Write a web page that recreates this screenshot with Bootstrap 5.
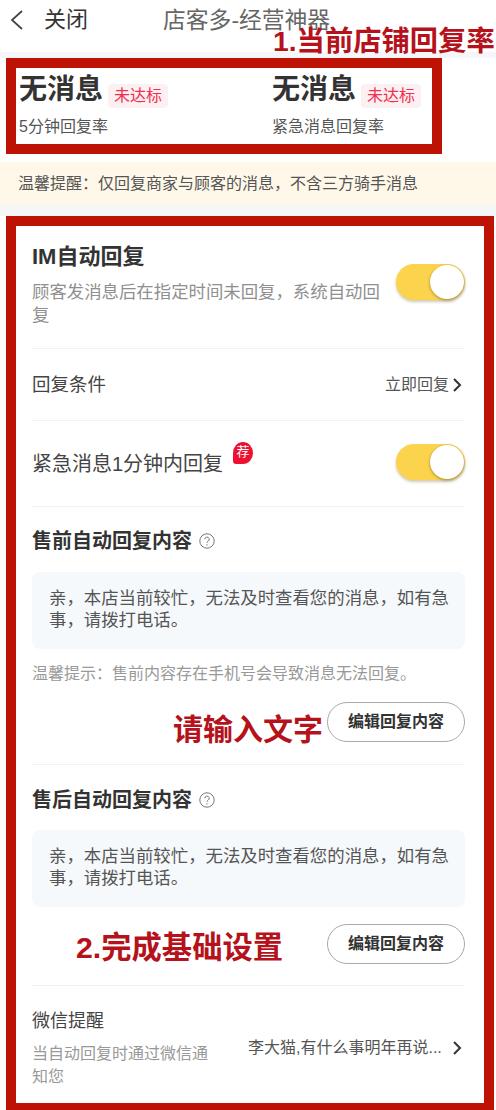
<!DOCTYPE html>
<html lang="zh-CN">
<head>
<meta charset="utf-8">
<title>店客多-经营神器</title>
<link href="https://cdn.jsdelivr.net/npm/bootstrap@5.3.0/dist/css/bootstrap.min.css" rel="stylesheet">
<style>
html,body{margin:0;background:#fff}
body{width:496px;height:1110px;overflow:hidden;position:relative;font-family:"Liberation Sans","Noto Sans CJK SC",sans-serif;color:#333}
.topbar{height:52px;padding:0 0 12px 10px}
.back-ic{width:13px;height:20px;margin-right:21px}
.close-txt{font-size:22px;line-height:1;width:44px;color:#333}
.page-title{font-size:22.8px;line-height:1;color:#666;margin-left:75px;white-space:nowrap}
.rate-zone{background:#fff;padding:6px 0 8px 6px;box-shadow:inset 0 6px 0 #f5f6f8}
.rate-box{width:436px;height:96px;border:10px solid #be1205;background:#fff;padding:2px 0 0 3px}
.rate-col{width:253px;flex:none}
.rate-col-end{flex:1 1 0;min-width:0}
.rate-val{font-size:28px;font-weight:700;line-height:40px;color:#333;white-space:nowrap}
.rate-tag{font-size:16px;line-height:24px;background:#fdf0f2;color:#f0304f;padding:0 6px;border-radius:4px;margin-left:5px;margin-top:11px}
.rate-lab{font-size:16px;line-height:22px;color:#555;margin-top:6px;white-space:nowrap}
.tip-band{height:43px;background:#fff8e8;padding-left:18px;font-size:16px;line-height:43px;color:#555}
.gap-band{height:11px;background:#f5f6f8}
.set-box{margin:0 2px 0 6px;height:894px;border:10px solid #be1205;border-bottom-width:7px;background:#fff;padding:0 19px 0 16px;position:relative}
.sect{border-bottom:1px solid #f1f2f3}
.sect-im{height:123px;padding-top:15px;position:relative}
.h-main{font-size:22px;font-weight:700;line-height:32px;color:#333}
.desc{font-size:17.4px;line-height:23px;color:#8f8f8f;width:352px;margin-top:8px}
.tgl{width:69px;height:36px;border-radius:18px;background:#fcd34d;position:relative;flex:none;box-shadow:0 2px 3px rgba(120,100,30,.35)}
.tgl-knob{position:absolute;right:1px;top:1px;width:34px;height:34px;border-radius:50%;background:#fff;box-shadow:0 1px 3px rgba(90,75,20,.55)}
.tgl-im{position:absolute;right:0;top:38px}
.tgl-up{margin-top:-4px}
.sect-cond{height:72px;font-size:18.5px;color:#444}
.side-txt{font-size:16px;color:#555;white-space:nowrap}
.chev{width:10px;height:16px;margin-left:3px;margin-right:3px}
.sect-urg{height:86px;font-size:20px;color:#444}
.hot{width:20px;height:22px;font-size:13px;line-height:20px;color:#fff;background:#ee1030;text-align:center;border-radius:50% 50% 50% 3px;position:absolute;left:217px;top:216px}
.sect-pre{height:258px;padding-top:23px}
.sect-post{height:221px;padding-top:24px}
.h-sub{font-size:20px;font-weight:700;line-height:22px;color:#333}
.q-ic{width:16px;height:16px;margin-left:7px}
.msg-box{margin-top:20px;height:77px;background:#f5f9fc;border-radius:8px;padding:15px 16px 0 17px;font-size:17.4px;line-height:22px;color:#555}
.sect-post .msg-box{margin-top:19px}
.warn-note{font-size:16px;line-height:22px;color:#999;margin-top:14px;white-space:nowrap}
.btn-row{margin-top:17px}
.edit-btn{width:138px;height:40px;border:1px solid #aaa;border-radius:20px;background:#fff;font-size:16px;font-weight:700;line-height:38px;text-align:center;color:#333;padding:0}
.wx-row{padding-top:22px;position:relative}
.wx-t{font-size:18px;line-height:26px;color:#444}
.wx-d{font-size:16px;line-height:23px;color:#999;width:180px;margin-top:8px}
.wx-r{position:absolute;left:216px;right:0;top:50px;font-size:16px;line-height:24px;color:#555;white-space:nowrap}
.note-red{position:absolute;color:#b5121b;font-weight:700;white-space:nowrap;line-height:1}
.note-a{left:273px;top:27px;font-size:28.3px}
.note-b{left:173px;top:715px;font-size:30px}
.note-c{left:76px;top:933px;font-size:30.3px}
</style>
</head>
<body>
<div class="topbar d-flex align-items-center">
  <svg class="back-ic" viewBox="0 0 13 20"><path d="M12 1 2 10l10 9" fill="none" stroke="#444" stroke-width="1.8"/></svg>
  <span class="close-txt">关闭</span>
  <span class="page-title">店客多-经营神器</span>
</div>
<div class="rate-zone">
  <div class="rate-box d-flex">
    <div class="rate-col">
      <div class="d-flex align-items-center"><span class="rate-val">无消息</span><span class="rate-tag">未达标</span></div>
      <div class="rate-lab">5分钟回复率</div>
    </div>
    <div class="rate-col-end">
      <div class="d-flex align-items-center"><span class="rate-val">无消息</span><span class="rate-tag">未达标</span></div>
      <div class="rate-lab">紧急消息回复率</div>
    </div>
  </div>
</div>
<div class="tip-band">温馨提醒：仅回复商家与顾客的消息，不含三方骑手消息</div>
<div class="gap-band"></div>
<div class="set-box">
  <div class="sect sect-im">
    <div class="h-main">IM自动回复</div>
    <div class="desc">顾客发消息后在指定时间未回复，系统自动回复</div>
    <div class="tgl tgl-im"><span class="tgl-knob"></span></div>
  </div>
  <div class="sect sect-cond d-flex align-items-center justify-content-between">
    <span>回复条件</span>
    <span class="side-txt d-flex align-items-center">立即回复<svg class="chev" viewBox="0 0 10 16"><path d="m2 2 6 6-6 6" fill="none" stroke="#333" stroke-width="2"/></svg></span>
  </div>
  <div class="sect sect-urg d-flex align-items-center justify-content-between">
    <span>紧急消息1分钟内回复</span>
    <div class="tgl tgl-up"><span class="tgl-knob"></span></div>
  </div>
  <span class="hot">荐</span>
  <div class="sect sect-pre">
    <div class="h-sub d-flex align-items-center">售前自动回复内容<svg class="q-ic" viewBox="0 0 16 16"><circle cx="8" cy="8" r="7.2" fill="none" stroke="#777" stroke-width="1"/><path d="M5.8 6.3a2.2 2.2 0 1 1 3.3 1.9c-.7.4-1.1.8-1.1 1.6" fill="none" stroke="#777" stroke-width="1"/><circle cx="8" cy="11.9" r=".7" fill="#777"/></svg></div>
    <div class="msg-box">亲，本店当前较忙，无法及时查看您的消息，如有急事，请拨打电话。</div>
    <div class="warn-note">温馨提示：售前内容存在手机号会导致消息无法回复。</div>
    <div class="d-flex justify-content-end btn-row"><button type="button" class="edit-btn">编辑回复内容</button></div>
  </div>
  <div class="sect sect-post">
    <div class="h-sub d-flex align-items-center">售后自动回复内容<svg class="q-ic" viewBox="0 0 16 16"><circle cx="8" cy="8" r="7.2" fill="none" stroke="#777" stroke-width="1"/><path d="M5.8 6.3a2.2 2.2 0 1 1 3.3 1.9c-.7.4-1.1.8-1.1 1.6" fill="none" stroke="#777" stroke-width="1"/><circle cx="8" cy="11.9" r=".7" fill="#777"/></svg></div>
    <div class="msg-box">亲，本店当前较忙，无法及时查看您的消息，如有急事，请拨打电话。</div>
    <div class="d-flex justify-content-end btn-row"><button type="button" class="edit-btn">编辑回复内容</button></div>
  </div>
  <div class="wx-row">
    <div class="wx-t">微信提醒</div>
    <div class="wx-d">当自动回复时通过微信通知您</div>
    <div class="wx-r d-flex align-items-center justify-content-between">李大猫,有什么事明年再说...<svg class="chev" viewBox="0 0 10 16"><path d="m2 2 6 6-6 6" fill="none" stroke="#333" stroke-width="2"/></svg></div>
  </div>
</div>
<div class="note-red note-a">1.当前店铺回复率</div>
<div class="note-red note-b">请输入文字</div>
<div class="note-red note-c">2.完成基础设置</div>
<script src="https://cdn.jsdelivr.net/npm/bootstrap@5.3.0/dist/js/bootstrap.bundle.min.js"></script>
</body>
</html>
